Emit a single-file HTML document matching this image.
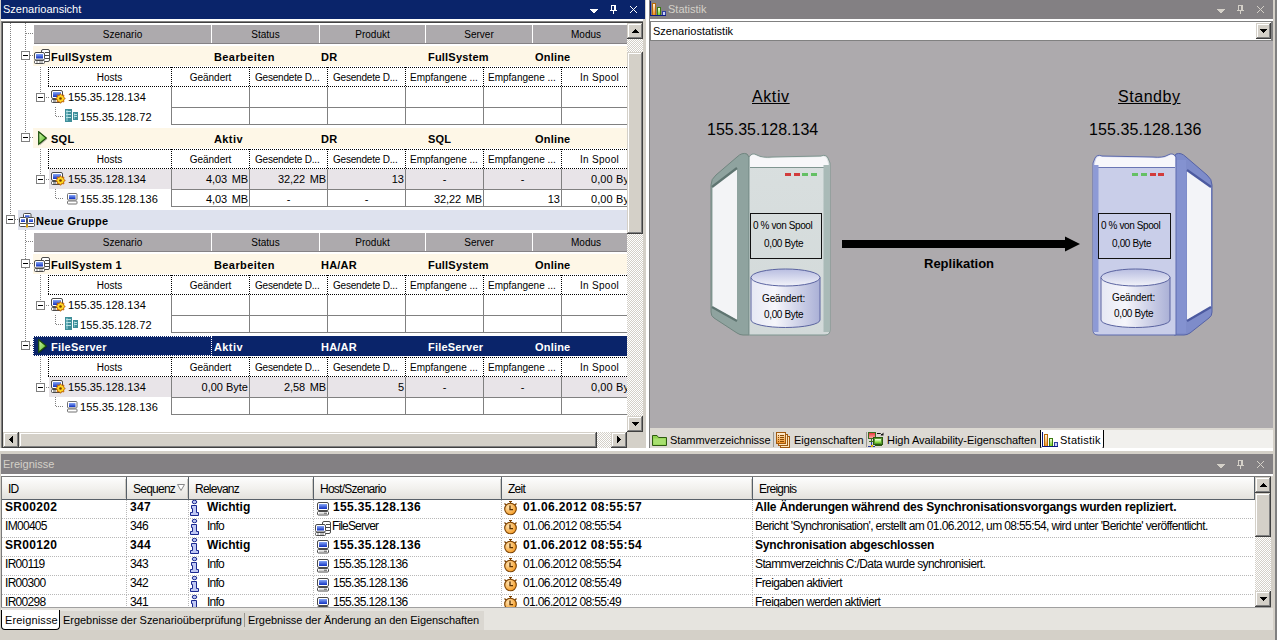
<!DOCTYPE html>
<html><head><meta charset="utf-8"><style>
html,body{margin:0;padding:0;}
body{width:1279px;height:640px;position:relative;overflow:hidden;background:#D4D0C8;font-family:"Liberation Sans", sans-serif;}
body div{position:absolute;}
.t{font-family:"Liberation Sans", sans-serif;}
u{text-decoration:underline;text-underline-offset:1px;}
</style></head><body>
<svg width="0" height="0" style="position:absolute"><defs>
<linearGradient id="scr" x1="0" y1="0" x2="0" y2="1"><stop offset="0" stop-color="#86a6f6"/><stop offset="1" stop-color="#1030c0"/></linearGradient>
<linearGradient id="grn" x1="0" y1="0" x2="1" y2="1"><stop offset="0" stop-color="#d8f8b0"/><stop offset="1" stop-color="#48b818"/></linearGradient>
<linearGradient id="ob" x1="0" y1="0" x2="0" y2="1"><stop offset="0" stop-color="#fff4e0"/><stop offset="1" stop-color="#f09020"/></linearGradient><linearGradient id="gb" x1="0" y1="0" x2="0" y2="1"><stop offset="0" stop-color="#f4ffe0"/><stop offset="1" stop-color="#70d020"/></linearGradient>
<linearGradient id="rd" x1="0" y1="0" x2="0" y2="1"><stop offset="0" stop-color="#e83030"/><stop offset="1" stop-color="#ffb0b0"/></linearGradient>
<radialGradient id="org" cx="0.35" cy="0.35" r="0.7"><stop offset="0" stop-color="#ffe2b0"/><stop offset="1" stop-color="#f59a20"/></radialGradient>
</defs></svg>
<div style="left:1px;top:0px;width:644px;height:19px;background:#0A246A"></div><div class="t" style="left:3px;top:3.69px;font-size:11px;line-height:11px;color:#fff;white-space:nowrap;">Szenarioansicht</div><svg style="position:absolute;left:590px;top:9px;" width="8" height="4" viewBox="0 0 8 4" shape-rendering="crispEdges"><path d="M0 0h8v1h-1v1h-1v1h-1v1h-2v-1h-1v-1h-1v-1h-1z" fill="#fff"/></svg><svg style="position:absolute;left:610px;top:5px;" width="7" height="9" viewBox="0 0 7 9" shape-rendering="crispEdges"><g fill="#fff"><rect x="1" y="0" width="5" height="1"/><rect x="1" y="0" width="1" height="5"/><rect x="4" y="0" width="2" height="5"/><rect x="0" y="5" width="7" height="1"/><rect x="3" y="6" width="1" height="3"/></g></svg><svg style="position:absolute;left:630px;top:6px;" width="7" height="7" viewBox="0 0 7 7" shape-rendering="crispEdges"><g fill="#fff"><rect x="0" y="0" width="1" height="1"/><rect x="6" y="0" width="1" height="1"/><rect x="1" y="1" width="1" height="1"/><rect x="5" y="1" width="1" height="1"/><rect x="2" y="2" width="1" height="1"/><rect x="4" y="2" width="1" height="1"/><rect x="3" y="3" width="1" height="1"/><rect x="3" y="3" width="1" height="1"/><rect x="4" y="4" width="1" height="1"/><rect x="2" y="4" width="1" height="1"/><rect x="5" y="5" width="1" height="1"/><rect x="1" y="5" width="1" height="1"/><rect x="6" y="6" width="1" height="1"/><rect x="0" y="6" width="1" height="1"/></g></svg><div style="left:1px;top:19px;width:644px;height:2px;background:#fff"></div><div style="left:1px;top:21px;width:644px;height:1px;background:#808080"></div><div style="left:1px;top:21px;width:1px;height:428px;background:#808080"></div><div style="left:2px;top:22px;width:642px;height:1px;background:#404040"></div><div style="left:2px;top:22px;width:1px;height:426px;background:#404040"></div><div style="left:3px;top:23px;width:640px;height:425px;background:#fff"></div><div style="left:3px;top:23px;width:624px;height:409px;overflow:hidden"><div style="left:-3px;top:-23px;width:1279px;height:640px;"><div style="left:10px;top:23px;width:1px;height:193px;background:repeating-linear-gradient(to bottom,#808080 0 1px,transparent 1px 2px)"></div><div style="left:25px;top:23px;width:1px;height:111px;background:repeating-linear-gradient(to bottom,#808080 0 1px,transparent 1px 2px)"></div><div style="left:26px;top:33px;width:8px;height:1px;background:repeating-linear-gradient(to right,#808080 0 1px,transparent 1px 2px)"></div><div style="left:34px;top:25px;width:593px;height:18px;background:#ADAAAD"></div><div style="left:34px;top:43px;width:593px;height:1px;background:#858285"></div><div style="left:211px;top:25px;width:1px;height:18px;background:#fff"></div><div style="left:319px;top:25px;width:1px;height:18px;background:#fff"></div><div style="left:425px;top:25px;width:1px;height:18px;background:#fff"></div><div style="left:532px;top:25px;width:1px;height:18px;background:#fff"></div><div class="t" style="left:34px;top:29.54px;font-size:10px;line-height:10px;color:#000;width:177px;text-align:center;white-space:nowrap;">Szenario</div><div class="t" style="left:212px;top:29.54px;font-size:10px;line-height:10px;color:#000;width:107px;text-align:center;white-space:nowrap;">Status</div><div class="t" style="left:320px;top:29.54px;font-size:10px;line-height:10px;color:#000;width:105px;text-align:center;white-space:nowrap;">Produkt</div><div class="t" style="left:426px;top:29.54px;font-size:10px;line-height:10px;color:#000;width:106px;text-align:center;white-space:nowrap;">Server</div><div class="t" style="left:533px;top:29.54px;font-size:10px;line-height:10px;color:#000;width:106px;text-align:center;white-space:nowrap;">Modus</div><div style="left:33px;top:46px;width:594px;height:20px;background:#FEF7E7"></div><div style="left:21px;top:51px;width:9px;height:9px;background:#fff;border:1px solid #808080;box-sizing:border-box"></div><div style="left:23px;top:55px;width:5px;height:1px;background:#000"></div><div style="left:30px;top:55px;width:3px;height:1px;background:repeating-linear-gradient(to right,#808080 0 1px,transparent 1px 2px)"></div><svg style="position:absolute;left:34px;top:49px;" width="16" height="16" viewBox="0 0 16 16"><rect x="7.5" y="0.5" width="8" height="12" rx="1.5" fill="#fff" stroke="#4a4a4a"/>
<path d="M11 3.5h4M11 6.5h4M11 9.5h4" stroke="#4a4a4a"/>
<rect x="0.5" y="3.5" width="10" height="7.5" rx="1.5" fill="#fff" stroke="#4a4a4a"/>
<rect x="2" y="5" width="7" height="4.5" fill="url(#scr)"/>
<rect x="0.5" y="11.5" width="10" height="3" rx="1" fill="#fff" stroke="#4a4a4a"/>
<path d="M2 13h2M5 13h4" stroke="#888"/></svg><div class="t" style="left:51px;top:51.69px;font-size:11px;line-height:11px;color:#000;font-weight:bold;white-space:nowrap;letter-spacing:0.25px">FullSystem</div><div class="t" style="left:214px;top:51.69px;font-size:11px;line-height:11px;color:#000;font-weight:bold;white-space:nowrap;letter-spacing:0.4px">Bearbeiten</div><div class="t" style="left:321px;top:51.69px;font-size:11px;line-height:11px;color:#000;font-weight:bold;white-space:nowrap;letter-spacing:0.2px">DR</div><div class="t" style="left:428px;top:51.69px;font-size:11px;line-height:11px;color:#000;font-weight:bold;white-space:nowrap;letter-spacing:0.2px">FullSystem</div><div class="t" style="left:535px;top:51.69px;font-size:11px;line-height:11px;color:#000;font-weight:bold;white-space:nowrap;letter-spacing:0.2px">Online</div><div style="left:40px;top:67px;width:1px;height:26px;background:repeating-linear-gradient(to bottom,#808080 0 1px,transparent 1px 2px)"></div><div style="left:48px;top:67px;width:579px;height:1px;background:repeating-linear-gradient(to right,#000 0 1px,transparent 1px 2px)"></div><div style="left:48px;top:86px;width:579px;height:1px;background:repeating-linear-gradient(to right,#000 0 1px,transparent 1px 2px)"></div><div style="left:48px;top:67px;width:1px;height:20px;background:repeating-linear-gradient(to bottom,#000 0 1px,transparent 1px 2px)"></div><div style="left:171px;top:67px;width:1px;height:20px;background:repeating-linear-gradient(to bottom,#000 0 1px,transparent 1px 2px)"></div><div style="left:249px;top:67px;width:1px;height:20px;background:repeating-linear-gradient(to bottom,#000 0 1px,transparent 1px 2px)"></div><div style="left:327px;top:67px;width:1px;height:20px;background:repeating-linear-gradient(to bottom,#000 0 1px,transparent 1px 2px)"></div><div style="left:405px;top:67px;width:1px;height:20px;background:repeating-linear-gradient(to bottom,#000 0 1px,transparent 1px 2px)"></div><div style="left:483px;top:67px;width:1px;height:20px;background:repeating-linear-gradient(to bottom,#000 0 1px,transparent 1px 2px)"></div><div style="left:561px;top:67px;width:1px;height:20px;background:repeating-linear-gradient(to bottom,#000 0 1px,transparent 1px 2px)"></div><div class="t" style="left:48px;top:72.54px;font-size:10px;line-height:10px;color:#000;width:123px;text-align:center;white-space:nowrap;">Hosts</div><div class="t" style="left:172px;top:72.54px;font-size:10px;line-height:10px;color:#000;width:77px;text-align:center;white-space:nowrap;">Geändert</div><div class="t" style="left:255px;top:72.54px;font-size:10px;line-height:10px;color:#000;white-space:nowrap;letter-spacing:-0.2px">Gesendete D...</div><div class="t" style="left:333px;top:72.54px;font-size:10px;line-height:10px;color:#000;white-space:nowrap;letter-spacing:-0.2px">Gesendete D...</div><div class="t" style="left:410px;top:72.54px;font-size:10px;line-height:10px;color:#000;white-space:nowrap;">Empfangene ...</div><div class="t" style="left:488px;top:72.54px;font-size:10px;line-height:10px;color:#000;white-space:nowrap;">Empfangene ...</div><div class="t" style="left:580px;top:72.54px;font-size:10px;line-height:10px;color:#000;white-space:nowrap;letter-spacing:0.3px">In Spool</div><div style="left:36px;top:93px;width:9px;height:9px;background:#fff;border:1px solid #808080;box-sizing:border-box"></div><div style="left:38px;top:97px;width:5px;height:1px;background:#000"></div><div style="left:46px;top:97px;width:3px;height:1px;background:repeating-linear-gradient(to right,#808080 0 1px,transparent 1px 2px)"></div><svg style="position:absolute;left:51px;top:90px;" width="16" height="16" viewBox="0 0 16 16"><rect x="0.5" y="0.5" width="11" height="8" rx="1.5" fill="#fff" stroke="#4a4a4a"/>
<rect x="2" y="2" width="8" height="5" fill="url(#scr)"/>
<rect x="0.5" y="9.5" width="10" height="3" rx="1" fill="#fff" stroke="#4a4a4a"/>
<path d="M2 11h3" stroke="#4a4a4a"/>
<path d="M14.30,8.50 L12.55,9.76 L12.89,11.89 L10.76,11.55 L9.50,13.30 L8.24,11.55 L6.11,11.89 L6.45,9.76 L4.70,8.50 L6.45,7.24 L6.11,5.11 L8.24,5.45 L9.50,3.70 L10.76,5.45 L12.89,5.11 L12.55,7.24Z" fill="#ffd820" stroke="#c05a00" stroke-width="0.9"/>
<circle cx="9.5" cy="8.5" r="1.3" fill="#7a3a00"/></svg><div class="t" style="left:68px;top:91.69px;font-size:11px;line-height:11px;color:#000;white-space:nowrap;letter-spacing:0.1px">155.35.128.134</div><div style="left:55px;top:107px;width:1px;height:10px;background:repeating-linear-gradient(to bottom,#808080 0 1px,transparent 1px 2px)"></div><div style="left:56px;top:116px;width:8px;height:1px;background:repeating-linear-gradient(to right,#808080 0 1px,transparent 1px 2px)"></div><svg style="position:absolute;left:65px;top:109px;" width="14" height="14" viewBox="0 0 14 14" shape-rendering="crispEdges"><rect x="0" y="0" width="7" height="13" fill="#3f8e99"/>
<rect x="1" y="1" width="2" height="11" fill="#6cb4bd"/>
<path d="M1 2.5h5M1 5.5h5M1 8.5h5" stroke="#b6e0e4"/>
<rect x="8" y="3" width="5" height="8" fill="#3f8e99"/>
<rect x="9" y="4" width="1" height="6" fill="#6cb4bd"/>
<path d="M9 5.5h3M9 7.5h3" stroke="#b6e0e4"/></svg><div class="t" style="left:80px;top:111.69px;font-size:11px;line-height:11px;color:#000;white-space:nowrap;letter-spacing:0.1px">155.35.128.72</div><div style="left:171px;top:107px;width:456px;height:1px;background:#808080"></div><div style="left:171px;top:124px;width:456px;height:1px;background:#808080"></div><div style="left:171px;top:87px;width:1px;height:38px;background:#808080"></div><div style="left:249px;top:87px;width:1px;height:38px;background:#808080"></div><div style="left:327px;top:87px;width:1px;height:38px;background:#808080"></div><div style="left:405px;top:87px;width:1px;height:38px;background:#808080"></div><div style="left:483px;top:87px;width:1px;height:38px;background:#808080"></div><div style="left:561px;top:87px;width:1px;height:38px;background:#808080"></div><div style="left:33px;top:128px;width:594px;height:20px;background:#FEF7E7"></div><div style="left:21px;top:133px;width:9px;height:9px;background:#fff;border:1px solid #808080;box-sizing:border-box"></div><div style="left:23px;top:137px;width:5px;height:1px;background:#000"></div><div style="left:30px;top:137px;width:3px;height:1px;background:repeating-linear-gradient(to right,#808080 0 1px,transparent 1px 2px)"></div><svg style="position:absolute;left:38px;top:131px;" width="11" height="16" viewBox="0 0 11 16"><path d="M1.8 1.8L9.5 8L1.8 14.5Z" fill="#000" opacity="0.25"/>
<path d="M0.7 0.7L8.3 7L0.7 13.3Z" fill="url(#grn)" stroke="#184a08" stroke-width="1.2"/></svg><div class="t" style="left:51px;top:133.69px;font-size:11px;line-height:11px;color:#000;font-weight:bold;white-space:nowrap;letter-spacing:0.25px">SQL</div><div class="t" style="left:214px;top:133.69px;font-size:11px;line-height:11px;color:#000;font-weight:bold;white-space:nowrap;letter-spacing:0.4px">Aktiv</div><div class="t" style="left:321px;top:133.69px;font-size:11px;line-height:11px;color:#000;font-weight:bold;white-space:nowrap;letter-spacing:0.2px">DR</div><div class="t" style="left:428px;top:133.69px;font-size:11px;line-height:11px;color:#000;font-weight:bold;white-space:nowrap;letter-spacing:0.2px">SQL</div><div class="t" style="left:535px;top:133.69px;font-size:11px;line-height:11px;color:#000;font-weight:bold;white-space:nowrap;letter-spacing:0.2px">Online</div><div style="left:40px;top:149px;width:1px;height:26px;background:repeating-linear-gradient(to bottom,#808080 0 1px,transparent 1px 2px)"></div><div style="left:48px;top:149px;width:579px;height:1px;background:repeating-linear-gradient(to right,#000 0 1px,transparent 1px 2px)"></div><div style="left:48px;top:168px;width:579px;height:1px;background:repeating-linear-gradient(to right,#000 0 1px,transparent 1px 2px)"></div><div style="left:48px;top:149px;width:1px;height:20px;background:repeating-linear-gradient(to bottom,#000 0 1px,transparent 1px 2px)"></div><div style="left:171px;top:149px;width:1px;height:20px;background:repeating-linear-gradient(to bottom,#000 0 1px,transparent 1px 2px)"></div><div style="left:249px;top:149px;width:1px;height:20px;background:repeating-linear-gradient(to bottom,#000 0 1px,transparent 1px 2px)"></div><div style="left:327px;top:149px;width:1px;height:20px;background:repeating-linear-gradient(to bottom,#000 0 1px,transparent 1px 2px)"></div><div style="left:405px;top:149px;width:1px;height:20px;background:repeating-linear-gradient(to bottom,#000 0 1px,transparent 1px 2px)"></div><div style="left:483px;top:149px;width:1px;height:20px;background:repeating-linear-gradient(to bottom,#000 0 1px,transparent 1px 2px)"></div><div style="left:561px;top:149px;width:1px;height:20px;background:repeating-linear-gradient(to bottom,#000 0 1px,transparent 1px 2px)"></div><div class="t" style="left:48px;top:154.54px;font-size:10px;line-height:10px;color:#000;width:123px;text-align:center;white-space:nowrap;">Hosts</div><div class="t" style="left:172px;top:154.54px;font-size:10px;line-height:10px;color:#000;width:77px;text-align:center;white-space:nowrap;">Geändert</div><div class="t" style="left:255px;top:154.54px;font-size:10px;line-height:10px;color:#000;white-space:nowrap;letter-spacing:-0.2px">Gesendete D...</div><div class="t" style="left:333px;top:154.54px;font-size:10px;line-height:10px;color:#000;white-space:nowrap;letter-spacing:-0.2px">Gesendete D...</div><div class="t" style="left:410px;top:154.54px;font-size:10px;line-height:10px;color:#000;white-space:nowrap;">Empfangene ...</div><div class="t" style="left:488px;top:154.54px;font-size:10px;line-height:10px;color:#000;white-space:nowrap;">Empfangene ...</div><div class="t" style="left:580px;top:154.54px;font-size:10px;line-height:10px;color:#000;white-space:nowrap;letter-spacing:0.3px">In Spool</div><div style="left:49px;top:169px;width:578px;height:20px;background:#E8E4E8"></div><div style="left:36px;top:175px;width:9px;height:9px;background:#fff;border:1px solid #808080;box-sizing:border-box"></div><div style="left:38px;top:179px;width:5px;height:1px;background:#000"></div><div style="left:46px;top:179px;width:3px;height:1px;background:repeating-linear-gradient(to right,#808080 0 1px,transparent 1px 2px)"></div><svg style="position:absolute;left:51px;top:172px;" width="16" height="16" viewBox="0 0 16 16"><rect x="0.5" y="0.5" width="11" height="8" rx="1.5" fill="#fff" stroke="#4a4a4a"/>
<rect x="2" y="2" width="8" height="5" fill="url(#scr)"/>
<rect x="0.5" y="9.5" width="10" height="3" rx="1" fill="#fff" stroke="#4a4a4a"/>
<path d="M2 11h3" stroke="#4a4a4a"/>
<path d="M14.30,8.50 L12.55,9.76 L12.89,11.89 L10.76,11.55 L9.50,13.30 L8.24,11.55 L6.11,11.89 L6.45,9.76 L4.70,8.50 L6.45,7.24 L6.11,5.11 L8.24,5.45 L9.50,3.70 L10.76,5.45 L12.89,5.11 L12.55,7.24Z" fill="#ffd820" stroke="#c05a00" stroke-width="0.9"/>
<circle cx="9.5" cy="8.5" r="1.3" fill="#7a3a00"/></svg><div class="t" style="left:68px;top:173.69px;font-size:11px;line-height:11px;color:#000;white-space:nowrap;letter-spacing:0.1px">155.35.128.134</div><div style="left:55px;top:189px;width:1px;height:10px;background:repeating-linear-gradient(to bottom,#808080 0 1px,transparent 1px 2px)"></div><div style="left:56px;top:198px;width:8px;height:1px;background:repeating-linear-gradient(to right,#808080 0 1px,transparent 1px 2px)"></div><svg style="position:absolute;left:67px;top:193px;" width="11" height="12" viewBox="0 0 11 12"><rect x="0.5" y="0.5" width="9.5" height="6.5" rx="1" fill="#fff" stroke="#707070"/>
<rect x="2" y="2" width="6.5" height="4" fill="url(#scr)"/>
<rect x="0.5" y="8" width="9.5" height="3" rx="0.8" fill="#fff" stroke="#707070"/></svg><div class="t" style="left:80px;top:193.69px;font-size:11px;line-height:11px;color:#000;white-space:nowrap;letter-spacing:0.1px">155.35.128.136</div><div style="left:171px;top:189px;width:456px;height:1px;background:#808080"></div><div style="left:171px;top:206px;width:456px;height:1px;background:#808080"></div><div style="left:171px;top:169px;width:1px;height:38px;background:#808080"></div><div style="left:249px;top:169px;width:1px;height:38px;background:#808080"></div><div style="left:327px;top:169px;width:1px;height:38px;background:#808080"></div><div style="left:405px;top:169px;width:1px;height:38px;background:#808080"></div><div style="left:483px;top:169px;width:1px;height:38px;background:#808080"></div><div style="left:561px;top:169px;width:1px;height:38px;background:#808080"></div><div class="t" style="left:172px;top:173.69px;font-size:11px;line-height:11px;color:#000;width:76px;text-align:right;white-space:nowrap;letter-spacing:-0.15px;word-spacing:2px">4,03 MB</div><div class="t" style="left:250px;top:173.69px;font-size:11px;line-height:11px;color:#000;width:76px;text-align:right;white-space:nowrap;letter-spacing:-0.15px;word-spacing:2px">32,22 MB</div><div class="t" style="left:328px;top:173.69px;font-size:11px;line-height:11px;color:#000;width:76px;text-align:right;white-space:nowrap;letter-spacing:0px">13</div><div class="t" style="left:406px;top:173.69px;font-size:11px;line-height:11px;color:#000;width:77px;text-align:center;white-space:nowrap;">-</div><div class="t" style="left:484px;top:173.69px;font-size:11px;line-height:11px;color:#000;width:77px;text-align:center;white-space:nowrap;">-</div><div class="t" style="left:591px;top:173.69px;font-size:11px;line-height:11px;color:#000;white-space:nowrap;letter-spacing:0.1px">0,00 Byte</div><div class="t" style="left:172px;top:193.69px;font-size:11px;line-height:11px;color:#000;width:76px;text-align:right;white-space:nowrap;letter-spacing:-0.15px;word-spacing:2px">4,03 MB</div><div class="t" style="left:250px;top:193.69px;font-size:11px;line-height:11px;color:#000;width:77px;text-align:center;white-space:nowrap;">-</div><div class="t" style="left:328px;top:193.69px;font-size:11px;line-height:11px;color:#000;width:77px;text-align:center;white-space:nowrap;">-</div><div class="t" style="left:406px;top:193.69px;font-size:11px;line-height:11px;color:#000;width:76px;text-align:right;white-space:nowrap;letter-spacing:-0.15px;word-spacing:2px">32,22 MB</div><div class="t" style="left:484px;top:193.69px;font-size:11px;line-height:11px;color:#000;width:76px;text-align:right;white-space:nowrap;letter-spacing:0px">13</div><div class="t" style="left:591px;top:193.69px;font-size:11px;line-height:11px;color:#000;white-space:nowrap;letter-spacing:0.1px">0,00 Byte</div><div style="left:18px;top:210px;width:609px;height:20px;background:#DEE2EE"></div><div style="left:6px;top:215px;width:9px;height:9px;background:#fff;border:1px solid #808080;box-sizing:border-box"></div><div style="left:8px;top:219px;width:5px;height:1px;background:#000"></div><div style="left:15px;top:219px;width:4px;height:1px;background:repeating-linear-gradient(to right,#808080 0 1px,transparent 1px 2px)"></div><svg style="position:absolute;left:19px;top:212px;" width="17" height="17" viewBox="0 0 17 17"><rect x="4.5" y="1.5" width="7.5" height="5" rx="1" fill="#fff" stroke="#4a4a4a"/><rect x="6" y="3" width="4.5" height="2.5" fill="url(#scr)"/>
<path d="M8 6.5v6" stroke="#4a4a4a" stroke-width="1.4"/>
<rect x="0.5" y="5.5" width="7" height="6" rx="1" fill="#fff" stroke="#4a4a4a"/><rect x="2" y="7" width="4" height="3" fill="url(#scr)"/>
<rect x="0.5" y="11.5" width="7" height="3" rx="1" fill="#fff" stroke="#4a4a4a"/>
<rect x="8.5" y="5.5" width="7" height="6" rx="1" fill="#fff" stroke="#4a4a4a"/><rect x="10" y="7" width="4" height="3" fill="url(#scr)"/>
<rect x="8.5" y="11.5" width="7" height="3" rx="1" fill="#fff" stroke="#4a4a4a"/>
<rect x="7" y="12.5" width="2" height="3" fill="#e0a000"/></svg><div class="t" style="left:36px;top:215.69px;font-size:11px;line-height:11px;color:#000;font-weight:bold;white-space:nowrap;letter-spacing:0.3px">Neue Gruppe</div><div style="left:25px;top:230px;width:1px;height:112px;background:repeating-linear-gradient(to bottom,#808080 0 1px,transparent 1px 2px)"></div><div style="left:26px;top:241px;width:8px;height:1px;background:repeating-linear-gradient(to right,#808080 0 1px,transparent 1px 2px)"></div><div style="left:34px;top:233px;width:593px;height:18px;background:#ADAAAD"></div><div style="left:34px;top:251px;width:593px;height:1px;background:#858285"></div><div style="left:211px;top:233px;width:1px;height:18px;background:#fff"></div><div style="left:319px;top:233px;width:1px;height:18px;background:#fff"></div><div style="left:425px;top:233px;width:1px;height:18px;background:#fff"></div><div style="left:532px;top:233px;width:1px;height:18px;background:#fff"></div><div class="t" style="left:34px;top:237.54px;font-size:10px;line-height:10px;color:#000;width:177px;text-align:center;white-space:nowrap;">Szenario</div><div class="t" style="left:212px;top:237.54px;font-size:10px;line-height:10px;color:#000;width:107px;text-align:center;white-space:nowrap;">Status</div><div class="t" style="left:320px;top:237.54px;font-size:10px;line-height:10px;color:#000;width:105px;text-align:center;white-space:nowrap;">Produkt</div><div class="t" style="left:426px;top:237.54px;font-size:10px;line-height:10px;color:#000;width:106px;text-align:center;white-space:nowrap;">Server</div><div class="t" style="left:533px;top:237.54px;font-size:10px;line-height:10px;color:#000;width:106px;text-align:center;white-space:nowrap;">Modus</div><div style="left:33px;top:254px;width:594px;height:20px;background:#FEF7E7"></div><div style="left:21px;top:259px;width:9px;height:9px;background:#fff;border:1px solid #808080;box-sizing:border-box"></div><div style="left:23px;top:263px;width:5px;height:1px;background:#000"></div><div style="left:30px;top:263px;width:3px;height:1px;background:repeating-linear-gradient(to right,#808080 0 1px,transparent 1px 2px)"></div><svg style="position:absolute;left:34px;top:257px;" width="16" height="16" viewBox="0 0 16 16"><rect x="7.5" y="0.5" width="8" height="12" rx="1.5" fill="#fff" stroke="#4a4a4a"/>
<path d="M11 3.5h4M11 6.5h4M11 9.5h4" stroke="#4a4a4a"/>
<rect x="0.5" y="3.5" width="10" height="7.5" rx="1.5" fill="#fff" stroke="#4a4a4a"/>
<rect x="2" y="5" width="7" height="4.5" fill="url(#scr)"/>
<rect x="0.5" y="11.5" width="10" height="3" rx="1" fill="#fff" stroke="#4a4a4a"/>
<path d="M2 13h2M5 13h4" stroke="#888"/></svg><div class="t" style="left:51px;top:259.69px;font-size:11px;line-height:11px;color:#000;font-weight:bold;white-space:nowrap;letter-spacing:0.25px">FullSystem 1</div><div class="t" style="left:214px;top:259.69px;font-size:11px;line-height:11px;color:#000;font-weight:bold;white-space:nowrap;letter-spacing:0.4px">Bearbeiten</div><div class="t" style="left:321px;top:259.69px;font-size:11px;line-height:11px;color:#000;font-weight:bold;white-space:nowrap;letter-spacing:0.2px">HA/AR</div><div class="t" style="left:428px;top:259.69px;font-size:11px;line-height:11px;color:#000;font-weight:bold;white-space:nowrap;letter-spacing:0.2px">FullSystem</div><div class="t" style="left:535px;top:259.69px;font-size:11px;line-height:11px;color:#000;font-weight:bold;white-space:nowrap;letter-spacing:0.2px">Online</div><div style="left:40px;top:275px;width:1px;height:26px;background:repeating-linear-gradient(to bottom,#808080 0 1px,transparent 1px 2px)"></div><div style="left:48px;top:275px;width:579px;height:1px;background:repeating-linear-gradient(to right,#000 0 1px,transparent 1px 2px)"></div><div style="left:48px;top:294px;width:579px;height:1px;background:repeating-linear-gradient(to right,#000 0 1px,transparent 1px 2px)"></div><div style="left:48px;top:275px;width:1px;height:20px;background:repeating-linear-gradient(to bottom,#000 0 1px,transparent 1px 2px)"></div><div style="left:171px;top:275px;width:1px;height:20px;background:repeating-linear-gradient(to bottom,#000 0 1px,transparent 1px 2px)"></div><div style="left:249px;top:275px;width:1px;height:20px;background:repeating-linear-gradient(to bottom,#000 0 1px,transparent 1px 2px)"></div><div style="left:327px;top:275px;width:1px;height:20px;background:repeating-linear-gradient(to bottom,#000 0 1px,transparent 1px 2px)"></div><div style="left:405px;top:275px;width:1px;height:20px;background:repeating-linear-gradient(to bottom,#000 0 1px,transparent 1px 2px)"></div><div style="left:483px;top:275px;width:1px;height:20px;background:repeating-linear-gradient(to bottom,#000 0 1px,transparent 1px 2px)"></div><div style="left:561px;top:275px;width:1px;height:20px;background:repeating-linear-gradient(to bottom,#000 0 1px,transparent 1px 2px)"></div><div class="t" style="left:48px;top:280.54px;font-size:10px;line-height:10px;color:#000;width:123px;text-align:center;white-space:nowrap;">Hosts</div><div class="t" style="left:172px;top:280.54px;font-size:10px;line-height:10px;color:#000;width:77px;text-align:center;white-space:nowrap;">Geändert</div><div class="t" style="left:255px;top:280.54px;font-size:10px;line-height:10px;color:#000;white-space:nowrap;letter-spacing:-0.2px">Gesendete D...</div><div class="t" style="left:333px;top:280.54px;font-size:10px;line-height:10px;color:#000;white-space:nowrap;letter-spacing:-0.2px">Gesendete D...</div><div class="t" style="left:410px;top:280.54px;font-size:10px;line-height:10px;color:#000;white-space:nowrap;">Empfangene ...</div><div class="t" style="left:488px;top:280.54px;font-size:10px;line-height:10px;color:#000;white-space:nowrap;">Empfangene ...</div><div class="t" style="left:580px;top:280.54px;font-size:10px;line-height:10px;color:#000;white-space:nowrap;letter-spacing:0.3px">In Spool</div><div style="left:36px;top:301px;width:9px;height:9px;background:#fff;border:1px solid #808080;box-sizing:border-box"></div><div style="left:38px;top:305px;width:5px;height:1px;background:#000"></div><div style="left:46px;top:305px;width:3px;height:1px;background:repeating-linear-gradient(to right,#808080 0 1px,transparent 1px 2px)"></div><svg style="position:absolute;left:51px;top:298px;" width="16" height="16" viewBox="0 0 16 16"><rect x="0.5" y="0.5" width="11" height="8" rx="1.5" fill="#fff" stroke="#4a4a4a"/>
<rect x="2" y="2" width="8" height="5" fill="url(#scr)"/>
<rect x="0.5" y="9.5" width="10" height="3" rx="1" fill="#fff" stroke="#4a4a4a"/>
<path d="M2 11h3" stroke="#4a4a4a"/>
<path d="M14.30,8.50 L12.55,9.76 L12.89,11.89 L10.76,11.55 L9.50,13.30 L8.24,11.55 L6.11,11.89 L6.45,9.76 L4.70,8.50 L6.45,7.24 L6.11,5.11 L8.24,5.45 L9.50,3.70 L10.76,5.45 L12.89,5.11 L12.55,7.24Z" fill="#ffd820" stroke="#c05a00" stroke-width="0.9"/>
<circle cx="9.5" cy="8.5" r="1.3" fill="#7a3a00"/></svg><div class="t" style="left:68px;top:299.69px;font-size:11px;line-height:11px;color:#000;white-space:nowrap;letter-spacing:0.1px">155.35.128.134</div><div style="left:55px;top:315px;width:1px;height:10px;background:repeating-linear-gradient(to bottom,#808080 0 1px,transparent 1px 2px)"></div><div style="left:56px;top:324px;width:8px;height:1px;background:repeating-linear-gradient(to right,#808080 0 1px,transparent 1px 2px)"></div><svg style="position:absolute;left:65px;top:317px;" width="14" height="14" viewBox="0 0 14 14" shape-rendering="crispEdges"><rect x="0" y="0" width="7" height="13" fill="#3f8e99"/>
<rect x="1" y="1" width="2" height="11" fill="#6cb4bd"/>
<path d="M1 2.5h5M1 5.5h5M1 8.5h5" stroke="#b6e0e4"/>
<rect x="8" y="3" width="5" height="8" fill="#3f8e99"/>
<rect x="9" y="4" width="1" height="6" fill="#6cb4bd"/>
<path d="M9 5.5h3M9 7.5h3" stroke="#b6e0e4"/></svg><div class="t" style="left:80px;top:319.69px;font-size:11px;line-height:11px;color:#000;white-space:nowrap;letter-spacing:0.1px">155.35.128.72</div><div style="left:171px;top:315px;width:456px;height:1px;background:#808080"></div><div style="left:171px;top:332px;width:456px;height:1px;background:#808080"></div><div style="left:171px;top:295px;width:1px;height:38px;background:#808080"></div><div style="left:249px;top:295px;width:1px;height:38px;background:#808080"></div><div style="left:327px;top:295px;width:1px;height:38px;background:#808080"></div><div style="left:405px;top:295px;width:1px;height:38px;background:#808080"></div><div style="left:483px;top:295px;width:1px;height:38px;background:#808080"></div><div style="left:561px;top:295px;width:1px;height:38px;background:#808080"></div><div style="left:33px;top:336px;width:594px;height:20px;background:#0A246A"></div><div style="left:33px;top:336px;width:179px;height:20px;border:1px dotted #fff;box-sizing:border-box;outline:0"></div><div style="left:21px;top:341px;width:9px;height:9px;background:#fff;border:1px solid #808080;box-sizing:border-box"></div><div style="left:23px;top:345px;width:5px;height:1px;background:#000"></div><div style="left:30px;top:345px;width:3px;height:1px;background:repeating-linear-gradient(to right,#808080 0 1px,transparent 1px 2px)"></div><svg style="position:absolute;left:38px;top:339px;" width="11" height="16" viewBox="0 0 11 16"><path d="M1.8 1.8L9.5 8L1.8 14.5Z" fill="#000" opacity="0.25"/>
<path d="M0.7 0.7L8.3 7L0.7 13.3Z" fill="url(#grn)" stroke="#184a08" stroke-width="1.2"/></svg><div class="t" style="left:51px;top:341.69px;font-size:11px;line-height:11px;color:#fff;font-weight:bold;white-space:nowrap;letter-spacing:0.25px">FileServer</div><div class="t" style="left:214px;top:341.69px;font-size:11px;line-height:11px;color:#fff;font-weight:bold;white-space:nowrap;letter-spacing:0.4px">Aktiv</div><div class="t" style="left:321px;top:341.69px;font-size:11px;line-height:11px;color:#fff;font-weight:bold;white-space:nowrap;letter-spacing:0.2px">HA/AR</div><div class="t" style="left:428px;top:341.69px;font-size:11px;line-height:11px;color:#fff;font-weight:bold;white-space:nowrap;letter-spacing:0.2px">FileServer</div><div class="t" style="left:535px;top:341.69px;font-size:11px;line-height:11px;color:#fff;font-weight:bold;white-space:nowrap;letter-spacing:0.2px">Online</div><div style="left:40px;top:357px;width:1px;height:26px;background:repeating-linear-gradient(to bottom,#808080 0 1px,transparent 1px 2px)"></div><div style="left:48px;top:357px;width:579px;height:1px;background:repeating-linear-gradient(to right,#000 0 1px,transparent 1px 2px)"></div><div style="left:48px;top:376px;width:579px;height:1px;background:repeating-linear-gradient(to right,#000 0 1px,transparent 1px 2px)"></div><div style="left:48px;top:357px;width:1px;height:20px;background:repeating-linear-gradient(to bottom,#000 0 1px,transparent 1px 2px)"></div><div style="left:171px;top:357px;width:1px;height:20px;background:repeating-linear-gradient(to bottom,#000 0 1px,transparent 1px 2px)"></div><div style="left:249px;top:357px;width:1px;height:20px;background:repeating-linear-gradient(to bottom,#000 0 1px,transparent 1px 2px)"></div><div style="left:327px;top:357px;width:1px;height:20px;background:repeating-linear-gradient(to bottom,#000 0 1px,transparent 1px 2px)"></div><div style="left:405px;top:357px;width:1px;height:20px;background:repeating-linear-gradient(to bottom,#000 0 1px,transparent 1px 2px)"></div><div style="left:483px;top:357px;width:1px;height:20px;background:repeating-linear-gradient(to bottom,#000 0 1px,transparent 1px 2px)"></div><div style="left:561px;top:357px;width:1px;height:20px;background:repeating-linear-gradient(to bottom,#000 0 1px,transparent 1px 2px)"></div><div class="t" style="left:48px;top:362.54px;font-size:10px;line-height:10px;color:#000;width:123px;text-align:center;white-space:nowrap;">Hosts</div><div class="t" style="left:172px;top:362.54px;font-size:10px;line-height:10px;color:#000;width:77px;text-align:center;white-space:nowrap;">Geändert</div><div class="t" style="left:255px;top:362.54px;font-size:10px;line-height:10px;color:#000;white-space:nowrap;letter-spacing:-0.2px">Gesendete D...</div><div class="t" style="left:333px;top:362.54px;font-size:10px;line-height:10px;color:#000;white-space:nowrap;letter-spacing:-0.2px">Gesendete D...</div><div class="t" style="left:410px;top:362.54px;font-size:10px;line-height:10px;color:#000;white-space:nowrap;">Empfangene ...</div><div class="t" style="left:488px;top:362.54px;font-size:10px;line-height:10px;color:#000;white-space:nowrap;">Empfangene ...</div><div class="t" style="left:580px;top:362.54px;font-size:10px;line-height:10px;color:#000;white-space:nowrap;letter-spacing:0.3px">In Spool</div><div style="left:49px;top:377px;width:578px;height:20px;background:#E8E4E8"></div><div style="left:36px;top:383px;width:9px;height:9px;background:#fff;border:1px solid #808080;box-sizing:border-box"></div><div style="left:38px;top:387px;width:5px;height:1px;background:#000"></div><div style="left:46px;top:387px;width:3px;height:1px;background:repeating-linear-gradient(to right,#808080 0 1px,transparent 1px 2px)"></div><svg style="position:absolute;left:51px;top:380px;" width="16" height="16" viewBox="0 0 16 16"><rect x="0.5" y="0.5" width="11" height="8" rx="1.5" fill="#fff" stroke="#4a4a4a"/>
<rect x="2" y="2" width="8" height="5" fill="url(#scr)"/>
<rect x="0.5" y="9.5" width="10" height="3" rx="1" fill="#fff" stroke="#4a4a4a"/>
<path d="M2 11h3" stroke="#4a4a4a"/>
<path d="M14.30,8.50 L12.55,9.76 L12.89,11.89 L10.76,11.55 L9.50,13.30 L8.24,11.55 L6.11,11.89 L6.45,9.76 L4.70,8.50 L6.45,7.24 L6.11,5.11 L8.24,5.45 L9.50,3.70 L10.76,5.45 L12.89,5.11 L12.55,7.24Z" fill="#ffd820" stroke="#c05a00" stroke-width="0.9"/>
<circle cx="9.5" cy="8.5" r="1.3" fill="#7a3a00"/></svg><div class="t" style="left:68px;top:381.69px;font-size:11px;line-height:11px;color:#000;white-space:nowrap;letter-spacing:0.1px">155.35.128.134</div><div style="left:55px;top:397px;width:1px;height:10px;background:repeating-linear-gradient(to bottom,#808080 0 1px,transparent 1px 2px)"></div><div style="left:56px;top:406px;width:8px;height:1px;background:repeating-linear-gradient(to right,#808080 0 1px,transparent 1px 2px)"></div><svg style="position:absolute;left:67px;top:401px;" width="11" height="12" viewBox="0 0 11 12"><rect x="0.5" y="0.5" width="9.5" height="6.5" rx="1" fill="#fff" stroke="#707070"/>
<rect x="2" y="2" width="6.5" height="4" fill="url(#scr)"/>
<rect x="0.5" y="8" width="9.5" height="3" rx="0.8" fill="#fff" stroke="#707070"/></svg><div class="t" style="left:80px;top:401.69px;font-size:11px;line-height:11px;color:#000;white-space:nowrap;letter-spacing:0.1px">155.35.128.136</div><div style="left:171px;top:397px;width:456px;height:1px;background:#808080"></div><div style="left:171px;top:414px;width:456px;height:1px;background:#808080"></div><div style="left:171px;top:377px;width:1px;height:38px;background:#808080"></div><div style="left:249px;top:377px;width:1px;height:38px;background:#808080"></div><div style="left:327px;top:377px;width:1px;height:38px;background:#808080"></div><div style="left:405px;top:377px;width:1px;height:38px;background:#808080"></div><div style="left:483px;top:377px;width:1px;height:38px;background:#808080"></div><div style="left:561px;top:377px;width:1px;height:38px;background:#808080"></div><div class="t" style="left:172px;top:381.69px;font-size:11px;line-height:11px;color:#000;width:76px;text-align:right;white-space:nowrap;letter-spacing:0px">0,00 Byte</div><div class="t" style="left:250px;top:381.69px;font-size:11px;line-height:11px;color:#000;width:76px;text-align:right;white-space:nowrap;letter-spacing:-0.15px;word-spacing:2px">2,58 MB</div><div class="t" style="left:328px;top:381.69px;font-size:11px;line-height:11px;color:#000;width:76px;text-align:right;white-space:nowrap;letter-spacing:0px">5</div><div class="t" style="left:406px;top:381.69px;font-size:11px;line-height:11px;color:#000;width:77px;text-align:center;white-space:nowrap;">-</div><div class="t" style="left:484px;top:381.69px;font-size:11px;line-height:11px;color:#000;width:77px;text-align:center;white-space:nowrap;">-</div><div class="t" style="left:591px;top:381.69px;font-size:11px;line-height:11px;color:#000;white-space:nowrap;letter-spacing:0.1px">0,00 Byte</div></div></div><div style="left:627px;top:23px;width:16px;height:409px;background-color:#fff;background-image:linear-gradient(45deg,#D4D0C8 25%,transparent 25%,transparent 75%,#D4D0C8 75%),linear-gradient(45deg,#D4D0C8 25%,transparent 25%,transparent 75%,#D4D0C8 75%);background-size:2px 2px;background-position:0 0,1px 1px;"></div><div style="left:627px;top:23px;width:16px;height:16px;background:#D4D0C8;box-shadow:inset -1px -1px #404040, inset 1px 1px #D4D0C8, inset -2px -2px #808080, inset 2px 2px #fff;"></div><svg style="position:absolute;left:632px;top:29px;" width="7" height="4" viewBox="0 0 7 4" shape-rendering="crispEdges"><path d="M3 0h1v1h1v1h1v1h1v1h-7v-1h1v-1h1v-1h1z" fill="#000"/></svg><div style="left:627px;top:52px;width:16px;height:182px;background:#D4D0C8;box-shadow:inset -1px -1px #404040, inset 1px 1px #D4D0C8, inset -2px -2px #808080, inset 2px 2px #fff;"></div><div style="left:627px;top:416px;width:16px;height:16px;background:#D4D0C8;box-shadow:inset -1px -1px #404040, inset 1px 1px #D4D0C8, inset -2px -2px #808080, inset 2px 2px #fff;"></div><svg style="position:absolute;left:632px;top:422px;" width="7" height="4" viewBox="0 0 7 4" shape-rendering="crispEdges"><path d="M0 0h7v1h-1v1h-1v1h-1v1h-1v-1h-1v-1h-1v-1h-1z" fill="#000"/></svg><div style="left:3px;top:432px;width:624px;height:16px;background-color:#fff;background-image:linear-gradient(45deg,#D4D0C8 25%,transparent 25%,transparent 75%,#D4D0C8 75%),linear-gradient(45deg,#D4D0C8 25%,transparent 25%,transparent 75%,#D4D0C8 75%);background-size:2px 2px;background-position:0 0,1px 1px;"></div><div style="left:3px;top:432px;width:16px;height:16px;background:#D4D0C8;box-shadow:inset -1px -1px #404040, inset 1px 1px #D4D0C8, inset -2px -2px #808080, inset 2px 2px #fff;"></div><svg style="position:absolute;left:9px;top:436px;" width="4" height="7" viewBox="0 0 4 7" shape-rendering="crispEdges"><path d="M0 3v1h1v1h1v1h1v1h1v-7h-1v1h-1v1h-1v1z" fill="#000"/></svg><div style="left:19px;top:432px;width:578px;height:16px;background:#D4D0C8;box-shadow:inset -1px -1px #404040, inset 1px 1px #D4D0C8, inset -2px -2px #808080, inset 2px 2px #fff;"></div><div style="left:611px;top:432px;width:16px;height:16px;background:#D4D0C8;box-shadow:inset -1px -1px #404040, inset 1px 1px #D4D0C8, inset -2px -2px #808080, inset 2px 2px #fff;"></div><svg style="position:absolute;left:617px;top:436px;" width="4" height="7" viewBox="0 0 4 7" shape-rendering="crispEdges"><path d="M0 0v7h1v-1h1v-1h1v-1h1v-1h-1v-1h-1v-1h-1v-1z" fill="#000"/></svg><div style="left:627px;top:432px;width:16px;height:16px;background:#D4D0C8"></div><div style="left:649px;top:0px;width:624px;height:19px;background:#838083"></div><svg style="position:absolute;left:650px;top:1px;" width="16" height="15" viewBox="0 0 16 15" shape-rendering="crispEdges"><rect x="0" y="0" width="1" height="15" fill="#0a1a80"/><rect x="0" y="14" width="16" height="1" fill="#0a1a80"/><rect x="2" y="2" width="4" height="12" fill="#b86808"/><rect x="3" y="3" width="2" height="11" fill="url(#ob)"/><rect x="7" y="6" width="4" height="8" fill="#3a7a10"/><rect x="8" y="7" width="2" height="7" fill="url(#gb)"/><rect x="12" y="10" width="4" height="4" fill="#3040a0"/><rect x="13" y="11" width="2" height="3" fill="#c8d0fa"/></svg><div class="t" style="left:668px;top:3.69px;font-size:11px;line-height:11px;color:#D4D0C8;white-space:nowrap;">Statistik</div><svg style="position:absolute;left:1217px;top:9px;" width="8" height="4" viewBox="0 0 8 4" shape-rendering="crispEdges"><path d="M0 0h8v1h-1v1h-1v1h-1v1h-2v-1h-1v-1h-1v-1h-1z" fill="#D4D0C8"/></svg><svg style="position:absolute;left:1237px;top:5px;" width="7" height="9" viewBox="0 0 7 9" shape-rendering="crispEdges"><g fill="#D4D0C8"><rect x="1" y="0" width="5" height="1"/><rect x="1" y="0" width="1" height="5"/><rect x="4" y="0" width="2" height="5"/><rect x="0" y="5" width="7" height="1"/><rect x="3" y="6" width="1" height="3"/></g></svg><svg style="position:absolute;left:1257px;top:6px;" width="7" height="7" viewBox="0 0 7 7" shape-rendering="crispEdges"><g fill="#D4D0C8"><rect x="0" y="0" width="1" height="1"/><rect x="6" y="0" width="1" height="1"/><rect x="1" y="1" width="1" height="1"/><rect x="5" y="1" width="1" height="1"/><rect x="2" y="2" width="1" height="1"/><rect x="4" y="2" width="1" height="1"/><rect x="3" y="3" width="1" height="1"/><rect x="3" y="3" width="1" height="1"/><rect x="4" y="4" width="1" height="1"/><rect x="2" y="4" width="1" height="1"/><rect x="5" y="5" width="1" height="1"/><rect x="1" y="5" width="1" height="1"/><rect x="6" y="6" width="1" height="1"/><rect x="0" y="6" width="1" height="1"/></g></svg><div style="left:650px;top:19px;width:623px;height:2px;background:#fff"></div><div style="left:650px;top:21px;width:623px;height:20px;background:#808080"></div><div style="left:651px;top:22px;width:620px;height:18px;background:#fff"></div><div class="t" style="left:653px;top:25.69px;font-size:11px;line-height:11px;color:#000;white-space:nowrap;">Szenariostatistik</div><div style="left:1256px;top:23px;width:15px;height:16px;background:#D4D0C8;box-shadow:inset -1px -1px #404040, inset 1px 1px #D4D0C8, inset -2px -2px #808080, inset 2px 2px #fff;"></div><svg style="position:absolute;left:1260px;top:29px;" width="7" height="4" viewBox="0 0 7 4" shape-rendering="crispEdges"><path d="M0 0h7v1h-1v1h-1v1h-1v1h-1v-1h-1v-1h-1v-1h-1z" fill="#000"/></svg><div style="left:650px;top:41px;width:623px;height:387px;background:#ADAAAD"></div><svg style="position:absolute;left:650px;top:41px" width="623" height="387" viewBox="0 0 623 387">
<defs>
<linearGradient id="cylA" x1="0" x2="1"><stop offset="0" stop-color="#e6e8f4"/><stop offset="0.35" stop-color="#f6f6fb"/><stop offset="1" stop-color="#aab0d6"/></linearGradient>
<linearGradient id="cylTop" x1="0" y1="0" x2="0" y2="1"><stop offset="0" stop-color="#b8bde0"/><stop offset="1" stop-color="#f2f3fa"/></linearGradient>
<linearGradient id="faceA" x1="0" y1="0" x2="0" y2="1"><stop offset="0" stop-color="#d9dfdf"/><stop offset="1" stop-color="#d2d9d9"/></linearGradient>
</defs>
<g transform="translate(-650,-41)">
<!-- ACTIVE -->
<path d="M711,312 L711,185 Q711,179 716,175 L737,157 Q742,152 747,154 L749,157 L749,335 L743,335 Q740,335 737,333 L714,318 Q711,316 711,312 Z" fill="#8fa39f" stroke="#70857f" stroke-width="1"/>
<path d="M712.5,187 L737,169 L737,320 L712.5,307 Z" fill="#f3f4f6"/>
<path d="M712,187 L737,168" stroke="#5f7571" stroke-width="2.2"/>
<path d="M712,307 L737,321" stroke="#5f7571" stroke-width="2.2"/>
<path d="M749,157 Q752,152 757,155 Q762,158 772,157 L821,156 Q826,154 828,158 L830,163 L830,330 Q830,335 825,335 L749,335 Z" fill="url(#faceA)" stroke="#7f9590" stroke-width="1"/>
<path d="M750,157 Q752,153 757,156 Q762,159 772,158 L821,157 Q825,155 827,159 L829,167 L750,167 Z" fill="#f7f7f9"/>
<path d="M750,167.5 L829,167.5" stroke="#7f9590" stroke-width="1"/>
<rect x="823.5" y="165" width="6" height="167" fill="#a9bab7"/>
<rect x="785" y="173" width="6" height="3" fill="#d23c3c"/><rect x="794" y="173" width="6" height="3" fill="#d23c3c"/>
<rect x="802" y="173" width="6" height="3" fill="#64c064"/><rect x="811" y="173" width="6" height="3" fill="#64c064"/>
<rect x="750.5" y="213.5" width="71" height="45" fill="none" stroke="#111" stroke-width="1"/>
<path d="M751,277.5 L751,320 A34.5,7.5 0 0 0 820,320 L820,277.5 Z" fill="url(#cylA)" stroke="#5a63a0" stroke-width="1"/>
<ellipse cx="785.5" cy="277.5" rx="34.5" ry="8.5" fill="url(#cylTop)" stroke="#5a63a0" stroke-width="1"/>
<!-- STANDBY -->
<path d="M1212,312 L1212,185 Q1212,179 1207,175 L1186,157 Q1181,152 1176,154 L1174,157 L1174,335 L1184,335 Q1187,335 1190,333 L1209,318 Q1212,316 1212,312 Z" fill="#7e8cca" stroke="#5562a6" stroke-width="1"/><rect x="1175" y="160" width="11" height="173" fill="#8492d0"/>
<path d="M1211,187 L1187,170 L1187,320 L1211,307 Z" fill="#f3f4f8"/>
<path d="M1211,187 L1187,170" stroke="#4c5aa0" stroke-width="2.2"/>
<path d="M1211,307 L1187,321" stroke="#4c5aa0" stroke-width="2.2"/>
<path d="M1176,157 Q1173,152 1168,155 Q1163,158 1153,157 L1102,156 Q1097,154 1095,158 L1093,163 L1093,330 Q1093,335 1098,335 L1176,335 Z" fill="#c9cee9" stroke="#5d6aae" stroke-width="1"/>
<path d="M1175,157 Q1173,153 1168,156 Q1163,159 1153,158 L1102,157 Q1098,155 1096,159 L1094,167 L1175,167 Z" fill="#f7f7fb"/>
<path d="M1094,167.5 L1175,167.5" stroke="#6a76b4" stroke-width="1"/>
<rect x="1093.5" y="165" width="5" height="167" fill="#8d9ad6"/>
<rect x="1132" y="173" width="6" height="3" fill="#64c064"/><rect x="1141" y="173" width="6" height="3" fill="#64c064"/>
<rect x="1150" y="173" width="6" height="3" fill="#d23c3c"/><rect x="1158" y="173" width="6" height="3" fill="#d23c3c"/>
<rect x="1098.5" y="213.5" width="72" height="45" fill="none" stroke="#111" stroke-width="1"/>
<path d="M1101,277.5 L1101,320 A34.5,7.5 0 0 0 1170,320 L1170,277.5 Z" fill="url(#cylA)" stroke="#5a63a0" stroke-width="1"/>
<ellipse cx="1135.5" cy="277.5" rx="34.5" ry="8.5" fill="url(#cylTop)" stroke="#5a63a0" stroke-width="1"/>
<!-- arrow -->
<rect x="842" y="240" width="226" height="8" fill="#000"/>
<path d="M1065,236.5 L1080,244 L1065,251.5 Z" fill="#000"/>
</g>
</svg><div class="t" style="left:752px;top:89.46px;font-size:16px;line-height:16px;color:#000;white-space:nowrap;letter-spacing:0.6px"><u>Aktiv</u></div><div class="t" style="left:707px;top:122.46px;font-size:16px;line-height:16px;color:#000;white-space:nowrap;">155.35.128.134</div><div class="t" style="left:1118px;top:89.46px;font-size:16px;line-height:16px;color:#000;white-space:nowrap;letter-spacing:0.55px"><u>Standby</u></div><div class="t" style="left:1089px;top:122.46px;font-size:16px;line-height:16px;color:#000;white-space:nowrap;letter-spacing:0.1px">155.35.128.136</div><div class="t" style="left:753px;top:220.54px;font-size:10px;line-height:10px;color:#000;white-space:nowrap;letter-spacing:-0.4px">0 % von Spool</div><div class="t" style="left:764px;top:238.54px;font-size:10px;line-height:10px;color:#000;white-space:nowrap;letter-spacing:-0.35px">0,00 Byte</div><div class="t" style="left:762px;top:293.54px;font-size:10px;line-height:10px;color:#000;white-space:nowrap;letter-spacing:-0.15px">Geändert:</div><div class="t" style="left:764px;top:309.54px;font-size:10px;line-height:10px;color:#000;white-space:nowrap;letter-spacing:-0.35px">0,00 Byte</div><div class="t" style="left:1101px;top:220.54px;font-size:10px;line-height:10px;color:#000;white-space:nowrap;letter-spacing:-0.4px">0 % von Spool</div><div class="t" style="left:1112px;top:238.54px;font-size:10px;line-height:10px;color:#000;white-space:nowrap;letter-spacing:-0.35px">0,00 Byte</div><div class="t" style="left:1112px;top:292.54px;font-size:10px;line-height:10px;color:#000;white-space:nowrap;letter-spacing:-0.15px">Geändert:</div><div class="t" style="left:1114px;top:308.54px;font-size:10px;line-height:10px;color:#000;white-space:nowrap;letter-spacing:-0.35px">0,00 Byte</div><div class="t" style="left:924px;top:257.00px;font-size:13px;line-height:13px;color:#000;font-weight:bold;white-space:nowrap;">Replikation</div><div style="left:650px;top:428px;width:623px;height:23px;background:#F1F0ED"></div><div style="left:650px;top:428px;width:623px;height:2px;background:#DCD9D2"></div><div style="left:650px;top:430px;width:390px;height:20px;background:#DCD9D3"></div><svg style="position:absolute;left:652px;top:433px;" width="15" height="14" viewBox="0 0 15 14"><path d="M0.5 2.5 L0.5 12.5 L14.5 12.5 L14.5 4.5 L6.5 4.5 L5 2.5 Z" fill="#8fd14f" stroke="#2d5a10"/><path d="M1.5 5.5 L13.5 5.5 L13.5 11.5 L1.5 11.5 Z" fill="#a8e070"/></svg><div class="t" style="left:670px;top:434.69px;font-size:11px;line-height:11px;color:#000;white-space:nowrap;letter-spacing:-0.05px">Stammverzeichnisse</div><div style="left:773px;top:432px;width:1px;height:15px;background:#9a978f"></div><svg style="position:absolute;left:776px;top:432px;" width="15" height="16" viewBox="0 0 15 16"><rect x="4.5" y="4.5" width="9" height="11" fill="#fde6bc" stroke="#a05a10"/><rect x="2.5" y="2.5" width="9" height="11" fill="#fde6bc" stroke="#a05a10"/><rect x="0.5" y="0.5" width="9" height="11" fill="url(#ob)" stroke="#a05a10"/><path d="M2 3.5h1M4 3.5h4M2 5.5h1M4 5.5h4M2 7.5h1M4 7.5h4M2 9.5h1M4 9.5h4" stroke="#8a4a00"/></svg><div class="t" style="left:794px;top:434.69px;font-size:11px;line-height:11px;color:#000;white-space:nowrap;letter-spacing:0px">Eigenschaften</div><div style="left:866px;top:432px;width:1px;height:15px;background:#9a978f"></div><svg style="position:absolute;left:867px;top:432px;" width="18" height="16" viewBox="0 0 18 16"><rect x="1.5" y="0.5" width="7" height="6" fill="url(#rd)" stroke="#3a6a20"/><path d="M4.5 7v2M2 9.5h5" stroke="#3a6a20"/><rect x="6.5" y="5.5" width="9" height="7" fill="#5a9a30" stroke="#2a5a10"/><rect x="8" y="7" width="6" height="4" fill="url(#gb)"/><path d="M8 13.5h7" stroke="#2a5a10"/><path d="M10 1.5h3.5l1.5 1.5" stroke="#111" fill="none"/><path d="M13.5 3.5h3v-3z" fill="#111"/><path d="M4.5 10v4M1 14.5h7" stroke="#2a3aa0"/><rect x="4" y="13" width="2" height="2" fill="#e0b000"/></svg><div class="t" style="left:887px;top:434.69px;font-size:11px;line-height:11px;color:#000;white-space:nowrap;letter-spacing:-0.03px">High Availability-Eigenschaften</div><div style="left:1040px;top:430px;width:64px;height:20px;background:#fff;border:1px solid #000;border-top:none;border-radius:0 0 4px 4px;box-sizing:border-box"></div><svg style="position:absolute;left:1042px;top:432px;" width="16" height="15" viewBox="0 0 16 15" shape-rendering="crispEdges"><rect x="0" y="0" width="1" height="15" fill="#0a1a80"/><rect x="0" y="14" width="16" height="1" fill="#0a1a80"/><rect x="2" y="2" width="4" height="12" fill="#b86808"/><rect x="3" y="3" width="2" height="11" fill="url(#ob)"/><rect x="7" y="6" width="4" height="8" fill="#3a7a10"/><rect x="8" y="7" width="2" height="7" fill="url(#gb)"/><rect x="12" y="10" width="4" height="4" fill="#3040a0"/><rect x="13" y="11" width="2" height="3" fill="#c8d0fa"/></svg><div class="t" style="left:1060px;top:434.69px;font-size:11px;line-height:11px;color:#000;white-space:nowrap;letter-spacing:0.25px">Statistik</div><div style="left:643px;top:19px;width:3px;height:430px;background:#D4D0C8"></div><div style="left:649px;top:19px;width:1px;height:430px;background:#808080"></div><div style="left:646px;top:0px;width:3px;height:449px;background:#fff"></div><div style="left:1273px;top:0px;width:2px;height:640px;background:#D4D0C8"></div><div style="left:1275px;top:0px;width:2px;height:640px;background:#808080"></div><div style="left:1277px;top:0px;width:2px;height:640px;background:#fff"></div><div style="left:0px;top:448px;width:1273px;height:3px;background:#fff"></div><div style="left:0px;top:451px;width:1273px;height:3px;background:#D4D0C8"></div><div style="left:1px;top:454px;width:1272px;height:20px;background:#838083"></div><div class="t" style="left:3px;top:458.69px;font-size:11px;line-height:11px;color:#D4D0C8;white-space:nowrap;">Ereignisse</div><svg style="position:absolute;left:1217px;top:464px;" width="8" height="4" viewBox="0 0 8 4" shape-rendering="crispEdges"><path d="M0 0h8v1h-1v1h-1v1h-1v1h-2v-1h-1v-1h-1v-1h-1z" fill="#D4D0C8"/></svg><svg style="position:absolute;left:1237px;top:460px;" width="7" height="9" viewBox="0 0 7 9" shape-rendering="crispEdges"><g fill="#D4D0C8"><rect x="1" y="0" width="5" height="1"/><rect x="1" y="0" width="1" height="5"/><rect x="4" y="0" width="2" height="5"/><rect x="0" y="5" width="7" height="1"/><rect x="3" y="6" width="1" height="3"/></g></svg><svg style="position:absolute;left:1257px;top:461px;" width="7" height="7" viewBox="0 0 7 7" shape-rendering="crispEdges"><g fill="#D4D0C8"><rect x="0" y="0" width="1" height="1"/><rect x="6" y="0" width="1" height="1"/><rect x="1" y="1" width="1" height="1"/><rect x="5" y="1" width="1" height="1"/><rect x="2" y="2" width="1" height="1"/><rect x="4" y="2" width="1" height="1"/><rect x="3" y="3" width="1" height="1"/><rect x="3" y="3" width="1" height="1"/><rect x="4" y="4" width="1" height="1"/><rect x="2" y="4" width="1" height="1"/><rect x="5" y="5" width="1" height="1"/><rect x="1" y="5" width="1" height="1"/><rect x="6" y="6" width="1" height="1"/><rect x="0" y="6" width="1" height="1"/></g></svg><div style="left:1px;top:474px;width:1272px;height:2px;background:#fff"></div><div style="left:1px;top:476px;width:1272px;height:132px;background:#fff"></div><div style="left:1px;top:476px;width:1272px;height:1px;background:#7a7a7a"></div><div style="left:1px;top:476px;width:1px;height:132px;background:#7a7a7a"></div><div style="left:1px;top:607px;width:1272px;height:1px;background:#a0a0a0"></div><div style="left:2px;top:477px;width:1253px;height:22px;background:linear-gradient(#fdfdfd,#f2f1ee 50%,#e3e1dc)"></div><div style="left:2px;top:499px;width:1253px;height:1px;background:#586068"></div><div style="left:125px;top:479px;width:1px;height:19px;background:#cdcac3"></div><div style="left:126px;top:477px;width:1px;height:22px;background:#586068"></div><div style="left:187px;top:479px;width:1px;height:19px;background:#cdcac3"></div><div style="left:188px;top:477px;width:1px;height:22px;background:#586068"></div><div style="left:312px;top:479px;width:1px;height:19px;background:#cdcac3"></div><div style="left:313px;top:477px;width:1px;height:22px;background:#586068"></div><div style="left:500px;top:479px;width:1px;height:19px;background:#cdcac3"></div><div style="left:501px;top:477px;width:1px;height:22px;background:#586068"></div><div style="left:751px;top:479px;width:1px;height:19px;background:#cdcac3"></div><div style="left:752px;top:477px;width:1px;height:22px;background:#586068"></div><div style="left:1254px;top:477px;width:1px;height:22px;background:#586068"></div><div class="t" style="left:8px;top:482.84px;font-size:12px;line-height:12px;color:#000;white-space:nowrap;letter-spacing:-0.75px">ID</div><div class="t" style="left:133px;top:482.84px;font-size:12px;line-height:12px;color:#000;white-space:nowrap;letter-spacing:-0.75px">Sequenz</div><div class="t" style="left:195px;top:482.84px;font-size:12px;line-height:12px;color:#000;white-space:nowrap;letter-spacing:-0.75px">Relevanz</div><div class="t" style="left:320px;top:482.84px;font-size:12px;line-height:12px;color:#000;white-space:nowrap;letter-spacing:-0.75px">Host/Szenario</div><div class="t" style="left:508px;top:482.84px;font-size:12px;line-height:12px;color:#000;white-space:nowrap;letter-spacing:-0.75px">Zeit</div><div class="t" style="left:759px;top:482.84px;font-size:12px;line-height:12px;color:#000;white-space:nowrap;letter-spacing:-0.75px">Ereignis</div><svg style="position:absolute;left:177px;top:484px;" width="8" height="7" viewBox="0 0 8 7"><path d="M0.5 0.5h7l-3.5 6z" fill="#fff" stroke="#888"/></svg><div style="left:2px;top:500px;width:1253px;height:107px;overflow:hidden"><div style="left:-2px;top:-500px;width:1279px;height:640px"><div class="t" style="left:5px;top:500.84px;font-size:12px;line-height:12px;color:#000;font-weight:bold;white-space:nowrap;letter-spacing:0.3px">SR00202</div><div class="t" style="left:130px;top:500.84px;font-size:12px;line-height:12px;color:#000;font-weight:bold;white-space:nowrap;letter-spacing:0.3px">347</div><svg style="position:absolute;left:190px;top:500px;" width="10" height="16" viewBox="0 0 10 16"><ellipse cx="4.5" cy="2" rx="2.3" ry="1.7" fill="#b8c2f2" stroke="#1a2890" stroke-width="1"/><path d="M1.5 5.5H6.5V12.5H8.5V15.5H0.5V12.5H2.5V8.5H1.5Z" fill="#c0c8f4" stroke="#1a2890" stroke-width="1"/></svg><div class="t" style="left:207px;top:500.84px;font-size:12px;line-height:12px;color:#000;font-weight:bold;white-space:nowrap;letter-spacing:0px">Wichtig</div><svg style="position:absolute;left:317px;top:502px;" width="12" height="14" viewBox="0 0 12 14"><rect x="0.5" y="0.5" width="11" height="8" rx="1.5" fill="#fff" stroke="#4a4a4a"/>
<rect x="2" y="2" width="8" height="5" fill="url(#scr)"/>
<rect x="0.5" y="9.5" width="11" height="3.5" rx="1" fill="#fff" stroke="#4a4a4a"/>
<path d="M2 11.2h5" stroke="#bbb"/><path d="M7 11.2h3" stroke="#4a4a4a"/></svg><div class="t" style="left:333px;top:500.84px;font-size:12px;line-height:12px;color:#000;font-weight:bold;white-space:nowrap;letter-spacing:0.33px">155.35.128.136</div><svg style="position:absolute;left:503px;top:501px;" width="15" height="15" viewBox="0 0 15 15"><path d="M6 0.5h3M7.5 0.5v2M1.5 2.5l2 2M13.5 2.5l-2 2" stroke="#7a4000" stroke-width="1.2"/><circle cx="7.5" cy="8" r="5.8" fill="url(#org)" stroke="#7a4000" stroke-width="1.1"/><path d="M7 4.5v4.2h3" stroke="#5a3000" fill="none" stroke-width="1.3"/></svg><div class="t" style="left:523px;top:500.84px;font-size:12px;line-height:12px;color:#000;font-weight:bold;white-space:nowrap;letter-spacing:0.4px">01.06.2012 08:55:57</div><div class="t" style="left:755px;top:500.84px;font-size:12px;line-height:12px;color:#000;font-weight:bold;white-space:nowrap;letter-spacing:-0.17px">Alle Änderungen während des Synchronisationsvorgangs wurden repliziert.</div><div style="left:2px;top:518px;width:1252px;height:1px;background:repeating-linear-gradient(to right,#b8b8b8 0 1px,transparent 1px 2px)"></div><div style="left:126px;top:500px;width:1px;height:18px;background:repeating-linear-gradient(to bottom,#b8b8b8 0 1px,transparent 1px 2px)"></div><div style="left:188px;top:500px;width:1px;height:18px;background:repeating-linear-gradient(to bottom,#b8b8b8 0 1px,transparent 1px 2px)"></div><div style="left:313px;top:500px;width:1px;height:18px;background:repeating-linear-gradient(to bottom,#b8b8b8 0 1px,transparent 1px 2px)"></div><div style="left:501px;top:500px;width:1px;height:18px;background:repeating-linear-gradient(to bottom,#b8b8b8 0 1px,transparent 1px 2px)"></div><div style="left:752px;top:500px;width:1px;height:18px;background:repeating-linear-gradient(to bottom,#b8b8b8 0 1px,transparent 1px 2px)"></div><div class="t" style="left:5px;top:519.84px;font-size:12px;line-height:12px;color:#000;white-space:nowrap;letter-spacing:-0.7px">IM00405</div><div class="t" style="left:130px;top:519.84px;font-size:12px;line-height:12px;color:#000;white-space:nowrap;letter-spacing:-0.7px">346</div><svg style="position:absolute;left:190px;top:519px;" width="10" height="16" viewBox="0 0 10 16"><ellipse cx="4.5" cy="2" rx="2.3" ry="1.7" fill="#b8c2f2" stroke="#1a2890" stroke-width="1"/><path d="M1.5 5.5H6.5V12.5H8.5V15.5H0.5V12.5H2.5V8.5H1.5Z" fill="#c0c8f4" stroke="#1a2890" stroke-width="1"/></svg><div class="t" style="left:207px;top:519.84px;font-size:12px;line-height:12px;color:#000;white-space:nowrap;letter-spacing:-0.75px">Info</div><svg style="position:absolute;left:315px;top:521px;" width="16" height="16" viewBox="0 0 16 16"><rect x="7.5" y="0.5" width="8" height="12" rx="1.5" fill="#fff" stroke="#4a4a4a"/>
<path d="M11 3.5h4M11 6.5h4M11 9.5h4" stroke="#4a4a4a"/>
<rect x="0.5" y="3.5" width="10" height="7.5" rx="1.5" fill="#fff" stroke="#4a4a4a"/>
<rect x="2" y="5" width="7" height="4.5" fill="url(#scr)"/>
<rect x="0.5" y="11.5" width="10" height="3" rx="1" fill="#fff" stroke="#4a4a4a"/>
<path d="M2 13h2M5 13h4" stroke="#888"/></svg><div class="t" style="left:332px;top:519.84px;font-size:12px;line-height:12px;color:#000;white-space:nowrap;letter-spacing:-0.85px">FileServer</div><svg style="position:absolute;left:503px;top:520px;" width="15" height="15" viewBox="0 0 15 15"><path d="M6 0.5h3M7.5 0.5v2M1.5 2.5l2 2M13.5 2.5l-2 2" stroke="#7a4000" stroke-width="1.2"/><circle cx="7.5" cy="8" r="5.8" fill="url(#org)" stroke="#7a4000" stroke-width="1.1"/><path d="M7 4.5v4.2h3" stroke="#5a3000" fill="none" stroke-width="1.3"/></svg><div class="t" style="left:523px;top:519.84px;font-size:12px;line-height:12px;color:#000;white-space:nowrap;letter-spacing:-0.63px">01.06.2012 08:55:54</div><div class="t" style="left:755px;top:519.84px;font-size:12px;line-height:12px;color:#000;white-space:nowrap;letter-spacing:-0.62px">Bericht 'Synchronisation', erstellt am 01.06.2012, um 08:55:54, wird unter 'Berichte' veröffentlicht.</div><div style="left:2px;top:537px;width:1252px;height:1px;background:repeating-linear-gradient(to right,#b8b8b8 0 1px,transparent 1px 2px)"></div><div style="left:126px;top:519px;width:1px;height:18px;background:repeating-linear-gradient(to bottom,#b8b8b8 0 1px,transparent 1px 2px)"></div><div style="left:188px;top:519px;width:1px;height:18px;background:repeating-linear-gradient(to bottom,#b8b8b8 0 1px,transparent 1px 2px)"></div><div style="left:313px;top:519px;width:1px;height:18px;background:repeating-linear-gradient(to bottom,#b8b8b8 0 1px,transparent 1px 2px)"></div><div style="left:501px;top:519px;width:1px;height:18px;background:repeating-linear-gradient(to bottom,#b8b8b8 0 1px,transparent 1px 2px)"></div><div style="left:752px;top:519px;width:1px;height:18px;background:repeating-linear-gradient(to bottom,#b8b8b8 0 1px,transparent 1px 2px)"></div><div class="t" style="left:5px;top:538.84px;font-size:12px;line-height:12px;color:#000;font-weight:bold;white-space:nowrap;letter-spacing:0.3px">SR00120</div><div class="t" style="left:130px;top:538.84px;font-size:12px;line-height:12px;color:#000;font-weight:bold;white-space:nowrap;letter-spacing:0.3px">344</div><svg style="position:absolute;left:190px;top:538px;" width="10" height="16" viewBox="0 0 10 16"><ellipse cx="4.5" cy="2" rx="2.3" ry="1.7" fill="#b8c2f2" stroke="#1a2890" stroke-width="1"/><path d="M1.5 5.5H6.5V12.5H8.5V15.5H0.5V12.5H2.5V8.5H1.5Z" fill="#c0c8f4" stroke="#1a2890" stroke-width="1"/></svg><div class="t" style="left:207px;top:538.84px;font-size:12px;line-height:12px;color:#000;font-weight:bold;white-space:nowrap;letter-spacing:0px">Wichtig</div><svg style="position:absolute;left:317px;top:540px;" width="12" height="14" viewBox="0 0 12 14"><rect x="0.5" y="0.5" width="11" height="8" rx="1.5" fill="#fff" stroke="#4a4a4a"/>
<rect x="2" y="2" width="8" height="5" fill="url(#scr)"/>
<rect x="0.5" y="9.5" width="11" height="3.5" rx="1" fill="#fff" stroke="#4a4a4a"/>
<path d="M2 11.2h5" stroke="#bbb"/><path d="M7 11.2h3" stroke="#4a4a4a"/></svg><div class="t" style="left:333px;top:538.84px;font-size:12px;line-height:12px;color:#000;font-weight:bold;white-space:nowrap;letter-spacing:0.33px">155.35.128.136</div><svg style="position:absolute;left:503px;top:539px;" width="15" height="15" viewBox="0 0 15 15"><path d="M6 0.5h3M7.5 0.5v2M1.5 2.5l2 2M13.5 2.5l-2 2" stroke="#7a4000" stroke-width="1.2"/><circle cx="7.5" cy="8" r="5.8" fill="url(#org)" stroke="#7a4000" stroke-width="1.1"/><path d="M7 4.5v4.2h3" stroke="#5a3000" fill="none" stroke-width="1.3"/></svg><div class="t" style="left:523px;top:538.84px;font-size:12px;line-height:12px;color:#000;font-weight:bold;white-space:nowrap;letter-spacing:0.4px">01.06.2012 08:55:54</div><div class="t" style="left:755px;top:538.84px;font-size:12px;line-height:12px;color:#000;font-weight:bold;white-space:nowrap;letter-spacing:-0.17px">Synchronisation abgeschlossen</div><div style="left:2px;top:556px;width:1252px;height:1px;background:repeating-linear-gradient(to right,#b8b8b8 0 1px,transparent 1px 2px)"></div><div style="left:126px;top:538px;width:1px;height:18px;background:repeating-linear-gradient(to bottom,#b8b8b8 0 1px,transparent 1px 2px)"></div><div style="left:188px;top:538px;width:1px;height:18px;background:repeating-linear-gradient(to bottom,#b8b8b8 0 1px,transparent 1px 2px)"></div><div style="left:313px;top:538px;width:1px;height:18px;background:repeating-linear-gradient(to bottom,#b8b8b8 0 1px,transparent 1px 2px)"></div><div style="left:501px;top:538px;width:1px;height:18px;background:repeating-linear-gradient(to bottom,#b8b8b8 0 1px,transparent 1px 2px)"></div><div style="left:752px;top:538px;width:1px;height:18px;background:repeating-linear-gradient(to bottom,#b8b8b8 0 1px,transparent 1px 2px)"></div><div class="t" style="left:5px;top:557.84px;font-size:12px;line-height:12px;color:#000;white-space:nowrap;letter-spacing:-0.7px">IR00119</div><div class="t" style="left:130px;top:557.84px;font-size:12px;line-height:12px;color:#000;white-space:nowrap;letter-spacing:-0.7px">343</div><svg style="position:absolute;left:190px;top:557px;" width="10" height="16" viewBox="0 0 10 16"><ellipse cx="4.5" cy="2" rx="2.3" ry="1.7" fill="#b8c2f2" stroke="#1a2890" stroke-width="1"/><path d="M1.5 5.5H6.5V12.5H8.5V15.5H0.5V12.5H2.5V8.5H1.5Z" fill="#c0c8f4" stroke="#1a2890" stroke-width="1"/></svg><div class="t" style="left:207px;top:557.84px;font-size:12px;line-height:12px;color:#000;white-space:nowrap;letter-spacing:-0.75px">Info</div><svg style="position:absolute;left:317px;top:559px;" width="12" height="14" viewBox="0 0 12 14"><rect x="0.5" y="0.5" width="11" height="8" rx="1.5" fill="#fff" stroke="#4a4a4a"/>
<rect x="2" y="2" width="8" height="5" fill="url(#scr)"/>
<rect x="0.5" y="9.5" width="11" height="3.5" rx="1" fill="#fff" stroke="#4a4a4a"/>
<path d="M2 11.2h5" stroke="#bbb"/><path d="M7 11.2h3" stroke="#4a4a4a"/></svg><div class="t" style="left:333px;top:557.84px;font-size:12px;line-height:12px;color:#000;white-space:nowrap;letter-spacing:-0.64px">155.35.128.136</div><svg style="position:absolute;left:503px;top:558px;" width="15" height="15" viewBox="0 0 15 15"><path d="M6 0.5h3M7.5 0.5v2M1.5 2.5l2 2M13.5 2.5l-2 2" stroke="#7a4000" stroke-width="1.2"/><circle cx="7.5" cy="8" r="5.8" fill="url(#org)" stroke="#7a4000" stroke-width="1.1"/><path d="M7 4.5v4.2h3" stroke="#5a3000" fill="none" stroke-width="1.3"/></svg><div class="t" style="left:523px;top:557.84px;font-size:12px;line-height:12px;color:#000;white-space:nowrap;letter-spacing:-0.63px">01.06.2012 08:55:54</div><div class="t" style="left:755px;top:557.84px;font-size:12px;line-height:12px;color:#000;white-space:nowrap;letter-spacing:-0.62px">Stammverzeichnis C:/Data wurde synchronisiert.</div><div style="left:2px;top:575px;width:1252px;height:1px;background:repeating-linear-gradient(to right,#b8b8b8 0 1px,transparent 1px 2px)"></div><div style="left:126px;top:557px;width:1px;height:18px;background:repeating-linear-gradient(to bottom,#b8b8b8 0 1px,transparent 1px 2px)"></div><div style="left:188px;top:557px;width:1px;height:18px;background:repeating-linear-gradient(to bottom,#b8b8b8 0 1px,transparent 1px 2px)"></div><div style="left:313px;top:557px;width:1px;height:18px;background:repeating-linear-gradient(to bottom,#b8b8b8 0 1px,transparent 1px 2px)"></div><div style="left:501px;top:557px;width:1px;height:18px;background:repeating-linear-gradient(to bottom,#b8b8b8 0 1px,transparent 1px 2px)"></div><div style="left:752px;top:557px;width:1px;height:18px;background:repeating-linear-gradient(to bottom,#b8b8b8 0 1px,transparent 1px 2px)"></div><div class="t" style="left:5px;top:576.84px;font-size:12px;line-height:12px;color:#000;white-space:nowrap;letter-spacing:-0.7px">IR00300</div><div class="t" style="left:130px;top:576.84px;font-size:12px;line-height:12px;color:#000;white-space:nowrap;letter-spacing:-0.7px">342</div><svg style="position:absolute;left:190px;top:576px;" width="10" height="16" viewBox="0 0 10 16"><ellipse cx="4.5" cy="2" rx="2.3" ry="1.7" fill="#b8c2f2" stroke="#1a2890" stroke-width="1"/><path d="M1.5 5.5H6.5V12.5H8.5V15.5H0.5V12.5H2.5V8.5H1.5Z" fill="#c0c8f4" stroke="#1a2890" stroke-width="1"/></svg><div class="t" style="left:207px;top:576.84px;font-size:12px;line-height:12px;color:#000;white-space:nowrap;letter-spacing:-0.75px">Info</div><svg style="position:absolute;left:317px;top:578px;" width="12" height="14" viewBox="0 0 12 14"><rect x="0.5" y="0.5" width="11" height="8" rx="1.5" fill="#fff" stroke="#4a4a4a"/>
<rect x="2" y="2" width="8" height="5" fill="url(#scr)"/>
<rect x="0.5" y="9.5" width="11" height="3.5" rx="1" fill="#fff" stroke="#4a4a4a"/>
<path d="M2 11.2h5" stroke="#bbb"/><path d="M7 11.2h3" stroke="#4a4a4a"/></svg><div class="t" style="left:333px;top:576.84px;font-size:12px;line-height:12px;color:#000;white-space:nowrap;letter-spacing:-0.64px">155.35.128.136</div><svg style="position:absolute;left:503px;top:577px;" width="15" height="15" viewBox="0 0 15 15"><path d="M6 0.5h3M7.5 0.5v2M1.5 2.5l2 2M13.5 2.5l-2 2" stroke="#7a4000" stroke-width="1.2"/><circle cx="7.5" cy="8" r="5.8" fill="url(#org)" stroke="#7a4000" stroke-width="1.1"/><path d="M7 4.5v4.2h3" stroke="#5a3000" fill="none" stroke-width="1.3"/></svg><div class="t" style="left:523px;top:576.84px;font-size:12px;line-height:12px;color:#000;white-space:nowrap;letter-spacing:-0.63px">01.06.2012 08:55:49</div><div class="t" style="left:755px;top:576.84px;font-size:12px;line-height:12px;color:#000;white-space:nowrap;letter-spacing:-0.62px">Freigaben aktiviert</div><div style="left:2px;top:594px;width:1252px;height:1px;background:repeating-linear-gradient(to right,#b8b8b8 0 1px,transparent 1px 2px)"></div><div style="left:126px;top:576px;width:1px;height:18px;background:repeating-linear-gradient(to bottom,#b8b8b8 0 1px,transparent 1px 2px)"></div><div style="left:188px;top:576px;width:1px;height:18px;background:repeating-linear-gradient(to bottom,#b8b8b8 0 1px,transparent 1px 2px)"></div><div style="left:313px;top:576px;width:1px;height:18px;background:repeating-linear-gradient(to bottom,#b8b8b8 0 1px,transparent 1px 2px)"></div><div style="left:501px;top:576px;width:1px;height:18px;background:repeating-linear-gradient(to bottom,#b8b8b8 0 1px,transparent 1px 2px)"></div><div style="left:752px;top:576px;width:1px;height:18px;background:repeating-linear-gradient(to bottom,#b8b8b8 0 1px,transparent 1px 2px)"></div><div class="t" style="left:5px;top:595.84px;font-size:12px;line-height:12px;color:#000;white-space:nowrap;letter-spacing:-0.7px">IR00298</div><div class="t" style="left:130px;top:595.84px;font-size:12px;line-height:12px;color:#000;white-space:nowrap;letter-spacing:-0.7px">341</div><svg style="position:absolute;left:190px;top:595px;" width="10" height="16" viewBox="0 0 10 16"><ellipse cx="4.5" cy="2" rx="2.3" ry="1.7" fill="#b8c2f2" stroke="#1a2890" stroke-width="1"/><path d="M1.5 5.5H6.5V12.5H8.5V15.5H0.5V12.5H2.5V8.5H1.5Z" fill="#c0c8f4" stroke="#1a2890" stroke-width="1"/></svg><div class="t" style="left:207px;top:595.84px;font-size:12px;line-height:12px;color:#000;white-space:nowrap;letter-spacing:-0.75px">Info</div><svg style="position:absolute;left:317px;top:597px;" width="12" height="14" viewBox="0 0 12 14"><rect x="0.5" y="0.5" width="11" height="8" rx="1.5" fill="#fff" stroke="#4a4a4a"/>
<rect x="2" y="2" width="8" height="5" fill="url(#scr)"/>
<rect x="0.5" y="9.5" width="11" height="3.5" rx="1" fill="#fff" stroke="#4a4a4a"/>
<path d="M2 11.2h5" stroke="#bbb"/><path d="M7 11.2h3" stroke="#4a4a4a"/></svg><div class="t" style="left:333px;top:595.84px;font-size:12px;line-height:12px;color:#000;white-space:nowrap;letter-spacing:-0.64px">155.35.128.136</div><svg style="position:absolute;left:503px;top:596px;" width="15" height="15" viewBox="0 0 15 15"><path d="M6 0.5h3M7.5 0.5v2M1.5 2.5l2 2M13.5 2.5l-2 2" stroke="#7a4000" stroke-width="1.2"/><circle cx="7.5" cy="8" r="5.8" fill="url(#org)" stroke="#7a4000" stroke-width="1.1"/><path d="M7 4.5v4.2h3" stroke="#5a3000" fill="none" stroke-width="1.3"/></svg><div class="t" style="left:523px;top:595.84px;font-size:12px;line-height:12px;color:#000;white-space:nowrap;letter-spacing:-0.63px">01.06.2012 08:55:49</div><div class="t" style="left:755px;top:595.84px;font-size:12px;line-height:12px;color:#000;white-space:nowrap;letter-spacing:-0.62px">Freigaben werden aktiviert</div><div style="left:2px;top:613px;width:1252px;height:1px;background:repeating-linear-gradient(to right,#b8b8b8 0 1px,transparent 1px 2px)"></div><div style="left:126px;top:595px;width:1px;height:18px;background:repeating-linear-gradient(to bottom,#b8b8b8 0 1px,transparent 1px 2px)"></div><div style="left:188px;top:595px;width:1px;height:18px;background:repeating-linear-gradient(to bottom,#b8b8b8 0 1px,transparent 1px 2px)"></div><div style="left:313px;top:595px;width:1px;height:18px;background:repeating-linear-gradient(to bottom,#b8b8b8 0 1px,transparent 1px 2px)"></div><div style="left:501px;top:595px;width:1px;height:18px;background:repeating-linear-gradient(to bottom,#b8b8b8 0 1px,transparent 1px 2px)"></div><div style="left:752px;top:595px;width:1px;height:18px;background:repeating-linear-gradient(to bottom,#b8b8b8 0 1px,transparent 1px 2px)"></div></div></div><div style="left:1255px;top:477px;width:16px;height:130px;background-color:#fff;background-image:linear-gradient(45deg,#D4D0C8 25%,transparent 25%,transparent 75%,#D4D0C8 75%),linear-gradient(45deg,#D4D0C8 25%,transparent 25%,transparent 75%,#D4D0C8 75%);background-size:2px 2px;background-position:0 0,1px 1px;"></div><div style="left:1255px;top:477px;width:16px;height:16px;background:#D4D0C8;box-shadow:inset -1px -1px #404040, inset 1px 1px #D4D0C8, inset -2px -2px #808080, inset 2px 2px #fff;"></div><svg style="position:absolute;left:1260px;top:483px;" width="7" height="4" viewBox="0 0 7 4" shape-rendering="crispEdges"><path d="M3 0h1v1h1v1h1v1h1v1h-7v-1h1v-1h1v-1h1z" fill="#000"/></svg><div style="left:1255px;top:493px;width:16px;height:44px;background:#D4D0C8;box-shadow:inset -1px -1px #404040, inset 1px 1px #D4D0C8, inset -2px -2px #808080, inset 2px 2px #fff;"></div><div style="left:1255px;top:591px;width:16px;height:16px;background:#D4D0C8;box-shadow:inset -1px -1px #404040, inset 1px 1px #D4D0C8, inset -2px -2px #808080, inset 2px 2px #fff;"></div><svg style="position:absolute;left:1260px;top:597px;" width="7" height="4" viewBox="0 0 7 4" shape-rendering="crispEdges"><path d="M0 0h7v1h-1v1h-1v1h-1v1h-1v-1h-1v-1h-1v-1h-1z" fill="#000"/></svg><div style="left:1271px;top:476px;width:2px;height:132px;background:#D4D0C8"></div><div style="left:1px;top:608px;width:1272px;height:22px;background:#E6E4DF"></div><div style="left:1px;top:611px;width:483px;height:19px;background:#DAD7D1"></div><div style="left:1px;top:610px;width:59px;height:20px;background:#fff;border:1px solid #000;border-top:none;border-radius:0 0 4px 4px;box-sizing:border-box"></div><div class="t" style="left:5px;top:614.69px;font-size:11px;line-height:11px;color:#000;white-space:nowrap;letter-spacing:0.15px">Ereignisse</div><div class="t" style="left:63px;top:614.69px;font-size:11px;line-height:11px;color:#000;white-space:nowrap;letter-spacing:-0.03px">Ergebnisse der Szenarioüberprüfung</div><div style="left:244px;top:613px;width:1px;height:14px;background:#9a978f"></div><div class="t" style="left:248px;top:614.69px;font-size:11px;line-height:11px;color:#000;white-space:nowrap;letter-spacing:-0.07px">Ergebnisse der Änderung an den Eigenschaften</div>
</body></html>
